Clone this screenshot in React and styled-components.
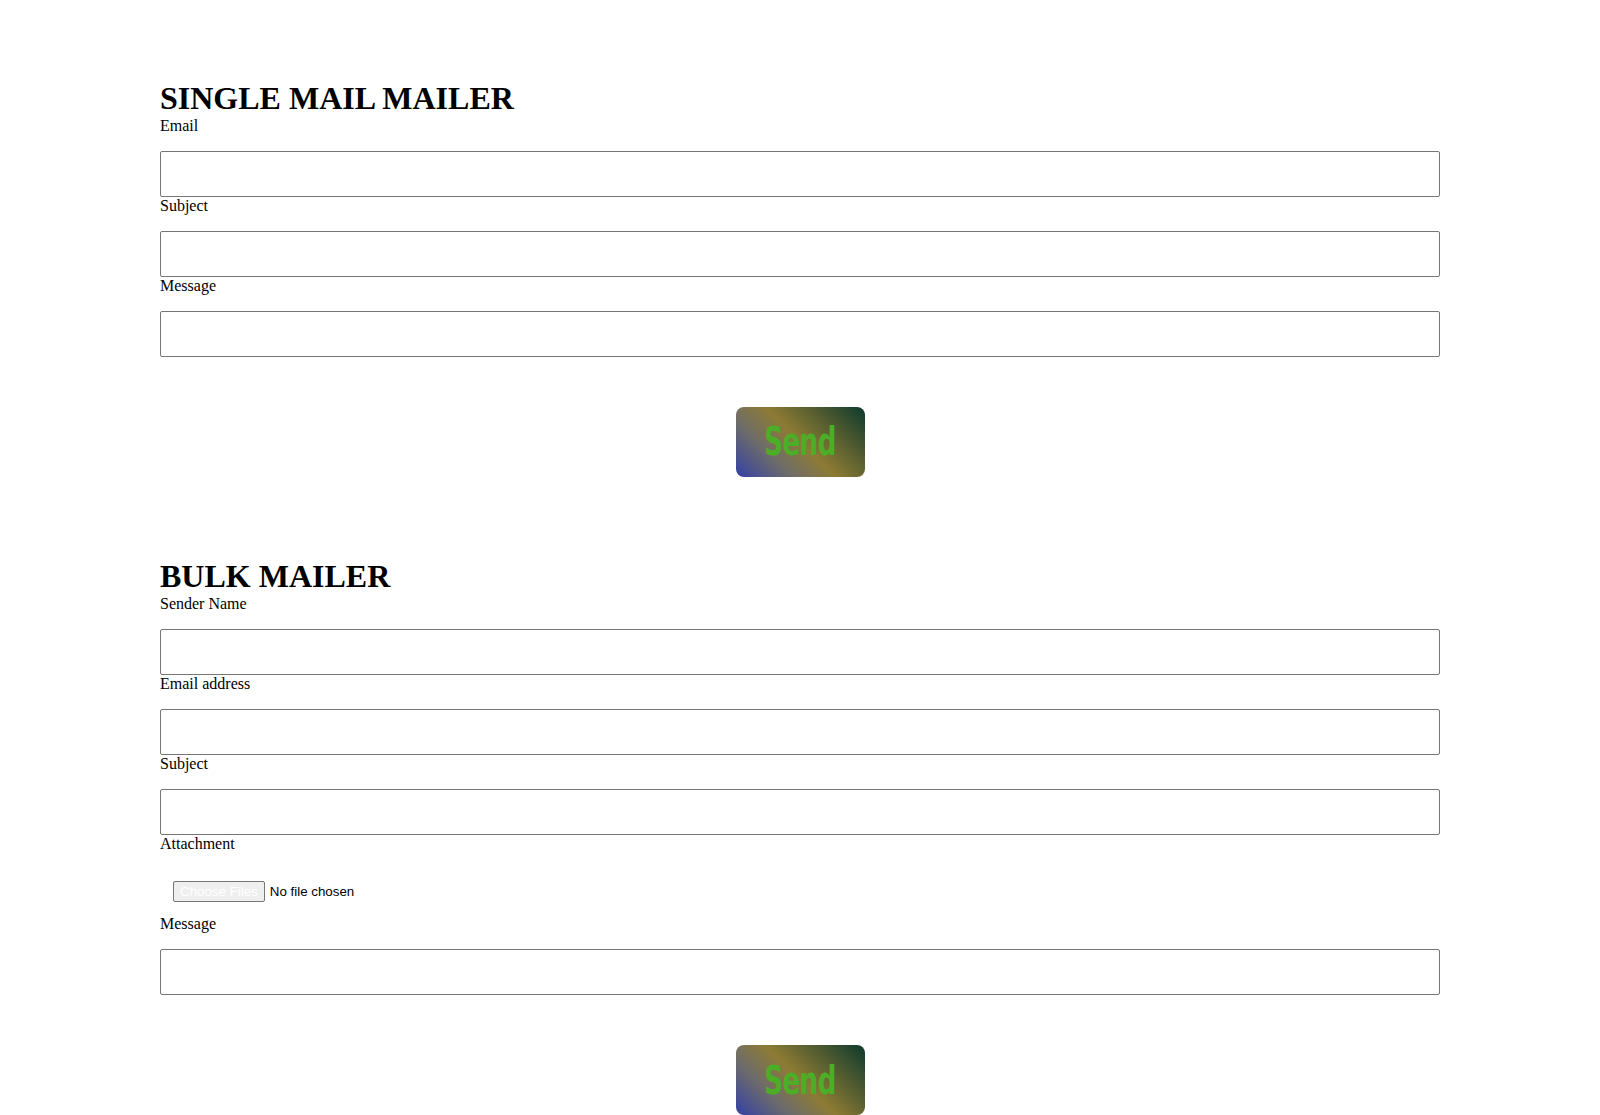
import React from "react";
import styled, { createGlobalStyle } from "styled-components";

const GlobalStyle = createGlobalStyle`
    body {
        margin: 0;
        background: #ffffff;
        font-family: "Liberation Serif", "Times New Roman", serif;
        color: #000000;
    }
`;

const Page = styled.main`
    width: 80%;
    margin: 0 auto;
    padding-top: 80px;
`;

const MailerForm = styled.form`
    display: flex;
    flex-direction: column;
    align-items: stretch;

    & + & {
        margin-top: 81px;
    }
`;

const Title = styled.h1`
    margin: 0;
    font-size: 32px;
    font-weight: 700;
    line-height: normal;
`;

const Label = styled.label`
    display: block;
    font-size: 16px;
    line-height: normal;
`;

const Field = styled.input`
    display: block;
    box-sizing: border-box;
    width: 100%;
    height: 46px;
    margin: 16px 0 0;
    padding: 0 12px;
    border: 1px solid #767676;
    border-radius: 2px;
    background: #ffffff;
    font-family: "Liberation Sans", Arial, sans-serif;
    font-size: 13.333px;
    color: #000000;
    outline: none;
`;

const FileField = styled(Field)`
    padding: 11px 12px 0;
    border-color: transparent;
    background: transparent;

    &::file-selector-button {
        height: 21px;
        margin-right: 5px;
        padding: 1px 6px;
        border: 1px solid #767676;
        border-radius: 2px;
        background: #efefef;
        color: #ffffff;
        font-family: "Liberation Sans", Arial, sans-serif;
        font-size: 13.333px;
    }
`;

const SendButton = styled.button`
    display: flex;
    align-items: center;
    justify-content: center;
    align-self: center;
    width: 129px;
    height: 70px;
    margin-top: 50px;
    padding: 0;
    border: none;
    border-radius: 8px;
    background: linear-gradient(45deg, #3340a6 0%, #6e6c6a 28%, #8d7b34 50%, #4f5a30 75%, #0c3a2c 100%);
    color: #4cae27;
    font-family: Impact, "Liberation Sans Narrow", "DejaVu Sans Condensed", sans-serif;
    font-weight: 700;
    font-size: 29px;
    cursor: pointer;
`;

const SendText = styled.span`
    display: inline-block;
    transform: scaleY(1.35);
    letter-spacing: -0.5px;
`;

const singleFields = [
    { id: "email", label: "Email", type: "email" },
    { id: "subject", label: "Subject", type: "text" },
    { id: "message", label: "Message", type: "text" },
];

const bulkFields = [
    { id: "sender", label: "Sender Name", type: "text" },
    { id: "emails", label: "Email address", type: "text" },
    { id: "bulkSubject", label: "Subject", type: "text" },
    { id: "attachment", label: "Attachment", type: "file" },
    { id: "bulkMessage", label: "Message", type: "text" },
];

const Mailer = ({ title, fields }) => (
    <MailerForm onSubmit={e => e.preventDefault()}>
        <Title>{title}</Title>
        {fields.map(f => (
            <React.Fragment key={f.id}>
                <Label htmlFor={f.id}>{f.label}</Label>
                {f.type === "file" ? (
                    <FileField id={f.id} type="file" multiple />
                ) : (
                    <Field id={f.id} type={f.type} />
                )}
            </React.Fragment>
        ))}
        <SendButton type="submit">
            <SendText>Send</SendText>
        </SendButton>
    </MailerForm>
);

export default function App() {
    return (
        <>
            <GlobalStyle />
            <Page>
                <Mailer title="SINGLE MAIL MAILER" fields={singleFields} />
                <Mailer title="BULK MAILER" fields={bulkFields} />
            </Page>
        </>
    );
}
